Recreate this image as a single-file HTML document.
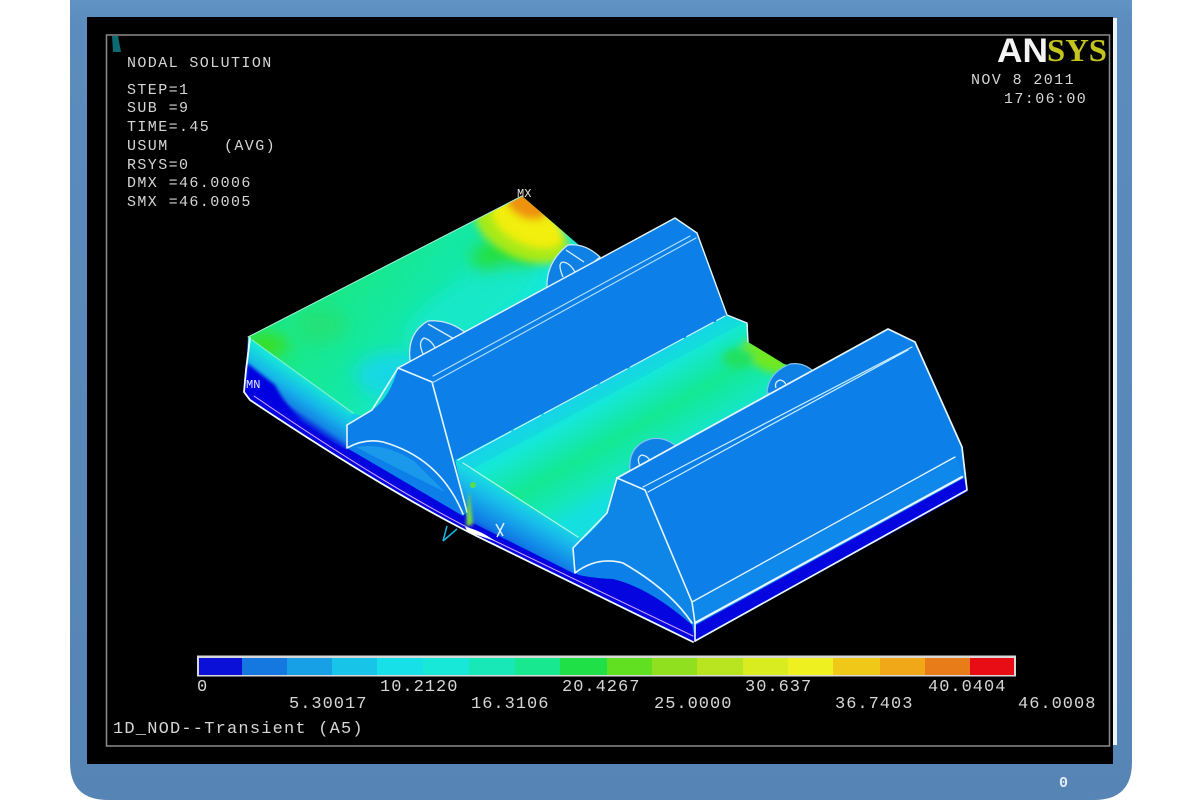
<!DOCTYPE html>
<html><head><meta charset="utf-8"><style>
html,body{margin:0;padding:0;background:#fff;width:1200px;height:800px;overflow:hidden}
svg{display:block}
text{font-family:"Liberation Mono",monospace;fill:#d6d6d6}
</style></head><body>
<svg width="1200" height="800" viewBox="0 0 1200 800" xmlns="http://www.w3.org/2000/svg">
<defs>
<linearGradient id="fr" x1="0" y1="0" x2="0" y2="1"><stop offset="0" stop-color="#6193c4"/><stop offset=".03" stop-color="#5b8cbd"/><stop offset="1" stop-color="#5685b5"/></linearGradient>
<linearGradient id="lslope" gradientUnits="userSpaceOnUse" x1="300" y1="375" x2="270" y2="420"><stop offset="0" stop-color="#16e6d8"/><stop offset=".3" stop-color="#16b8e8"/><stop offset=".55" stop-color="#1485e6"/><stop offset=".72" stop-color="#0505e0"/><stop offset="1" stop-color="#0505e0"/></linearGradient>
<linearGradient id="vslope" gradientUnits="userSpaceOnUse" x1="525" y1="495" x2="495" y2="548"><stop offset="0" stop-color="#18e8e0"/><stop offset=".35" stop-color="#18b8ea"/><stop offset=".75" stop-color="#0f78e6"/><stop offset="1" stop-color="#0505e0"/></linearGradient>
<linearGradient id="vtop" gradientUnits="userSpaceOnUse" x1="570" y1="395" x2="625" y2="490"><stop offset="0" stop-color="#18dcec"/><stop offset=".2" stop-color="#14e8d8"/><stop offset=".55" stop-color="#14e892"/><stop offset=".8" stop-color="#14e8b8"/><stop offset="1" stop-color="#14e0e0"/></linearGradient>
<linearGradient id="stop" gradientUnits="userSpaceOnUse" x1="350" y1="280" x2="450" y2="360"><stop offset="0" stop-color="#18e88a"/><stop offset=".55" stop-color="#14e8a8"/><stop offset="1" stop-color="#14e8d8"/></linearGradient>
<filter id="b8" x="-50%" y="-50%" width="200%" height="200%"><feGaussianBlur stdDeviation="8"/></filter>
<filter id="b4" x="-50%" y="-50%" width="200%" height="200%"><feGaussianBlur stdDeviation="4"/></filter>
<filter id="b2" x="-50%" y="-50%" width="200%" height="200%"><feGaussianBlur stdDeviation="1.6"/></filter>
<clipPath id="c1"><polygon points="248,337 522,196 580,246 600,258 430,370 375,418 353,414"/></clipPath>
<clipPath id="c2"><polygon points="455,460 727,315 748,324 748,342 784,364 815,372 640,480 620,525 590,550 578,538"/></clipPath>
</defs>

<path d="M70 0H1132V762Q1132 800 1094 800H108Q70 800 70 762Z" fill="url(#fr)"/>
<rect x="87" y="17" width="1026" height="747" fill="#000"/>
<rect x="1113" y="18" width="4" height="727" fill="#eef3f8"/>
<rect x="106.5" y="35" width="1003" height="711" fill="none" stroke="#8b8b8b" stroke-width="1.5"/>
<path d="M112 36h6l3 16h-8z" fill="#0d6a72"/>

<!-- base silhouette (lower strip only) -->
<path d="M248 337L244 392L250 400Q400 500 493 544L693 642L967 492L962 447L700 600L470 500L353 413Z" fill="#0505e0"/>
<path d="M248 337L353 413L347 450L250 398L245 388L247 365Z" fill="url(#lslope)"/>
<path d="M247 363Q262 375 275 385Q285 405 302 420L250 398L245 388Z" fill="#0505e0" filter="url(#b2)"/>
<path d="M455 460L578 537L575 574L467 520Z" fill="url(#vslope)"/>
<path d="M353 412L374 408L345 427Z" fill="#14c8e8"/>
<path d="M578 538L609 512L571 550Z" fill="#14c8e8"/>

<!-- left slab -->
<g clip-path="url(#c1)">
<rect x="240" y="190" width="370" height="240" fill="url(#stop)"/>
<g filter="url(#b8)">
<ellipse cx="265" cy="345" rx="24" ry="12" fill="#3ade20"/>
<ellipse cx="320" cy="325" rx="26" ry="18" fill="#20e278"/>
<ellipse cx="505" cy="258" rx="34" ry="20" fill="#20e040"/>
<ellipse cx="470" cy="305" rx="70" ry="22" fill="#14e8c8" transform="rotate(-28 470 305)"/>
<ellipse cx="395" cy="375" rx="40" ry="22" fill="#12d8e4"/>
</g>
<g filter="url(#b4)">
<ellipse cx="522" cy="232" rx="50" ry="26" fill="#a8ea18" transform="rotate(25 522 232)"/>
<ellipse cx="528" cy="224" rx="38" ry="20" fill="#f2ee10" transform="rotate(25 528 224)"/>
<ellipse cx="527" cy="204" rx="22" ry="14" fill="#ee9210" transform="rotate(25 527 204)"/>
</g>
</g>

<!-- valley -->
<g clip-path="url(#c2)">
<rect x="450" y="300" width="380" height="250" fill="url(#vtop)"/>
<g filter="url(#b4)">
<ellipse cx="765" cy="357" rx="26" ry="12" fill="#70e820" transform="rotate(30 765 357)"/>
<ellipse cx="738" cy="358" rx="16" ry="10" fill="#24e060"/>
</g>
<path d="M458 460L727 315L745 322L470 470Z" fill="#14b0e8" opacity=".2"/>
</g>

<!-- lugs -->
<g fill="#0f80e4" stroke="#cdeafa" stroke-width="1.2">
<path d="M410 360Q407 333 428 321Q448 319 466 333L430 372Z"/>
<path d="M547 288Q546 262 568 245Q585 243 600 257L560 290Z"/>
<path d="M630 470Q628 446 650 439Q665 436 677 447L640 475Z" stroke="#7fc4f0"/>
<path d="M767 393Q768 373 790 364Q803 362 813 371L780 395Z" stroke="#7fc4f0"/>
</g>
<g fill="none" stroke="#d6effc" stroke-width="1.3">
<path d="M424 356Q417 342 424 338Q432 340 436 350"/>
<path d="M563 277Q557 263 563 262Q570 263 575 272"/>
<path d="M640 466Q636 457 642 455Q648 456 650 461"/>
<path d="M776 388Q774 382 780 380Q785 381 786 385"/>
<path d="M428 324L456 340M566 250L584 262"/>
</g>

<!-- block 1 -->
<path d="M347 425L372 410Q390 398 398 368L675 218L697 233L727 315L455 460L467 512L463 516Q440 458 383 442Q365 438 347 448Z" fill="#0c80e8"/>
<path d="M347 448Q365 438 383 442Q440 458 463 516Z" fill="#0c80e8"/>
<path d="M356 447Q385 442 415 462L445 492L385 462Z" fill="#1a98ec"/>
<!-- block 2 -->
<path d="M617 478L888 329L915 342L962 447L967 490L695 640L692 623Q670 590 623 563Q597 556 575 573L573 548Q600 525 607 513Z" fill="#0c80e8"/>
<path d="M696 625L964 478L967 491L695 641Z" fill="#0505e0"/>
<path d="M575 573Q597 556 623 563Q670 590 692 623L693 636Z" fill="#0c80e8"/>
<path d="M575 574Q590 578 613 579Q650 588 692 625L693 636Z" fill="#0505e0"/>
<path d="M692 603L957 458L963 477L696 623Z" fill="#0e88ea"/>
<path d="M620 480L645 492L692 603L692 622Q660 585 623 563Q597 556 578 572L574 548Q600 525 607 513Z" fill="#0e86e8"/>

<!-- white edges -->
<g fill="none" stroke="#e6f6ff" stroke-width="1.6" stroke-linecap="round" stroke-linejoin="round">
<path d="M248 337L522 196" stroke="#a9f2d8" stroke-width="1"/>
<path d="M250 338L246 370L244 392L250 400Q400 500 493 544L693 642" stroke-width="1.8" stroke="#f2fbff"/>
<path d="M254 396Q400 496 493 540L693 636" stroke="#d8a8ff" stroke-width="1"/>
<path d="M353 413L252 340" stroke="#7ff0d0" stroke-width="1.2"/>
<path d="M578 537L463 463" stroke="#b0f4e8" stroke-width="1.2"/>
<path d="M398 368L372 410L347 425L347 448Q365 438 383 442Q440 458 463 514"/>
<path d="M398 368L432 382L467 512" />
<path d="M398 368L675 218L697 233L727 315L747 323L748 342" stroke-width="1.4"/>
<path d="M433 376L690 236M432 383L696 238" stroke-width="1.1" stroke="#b7e2fb"/>
<path d="M458 460L725 316" stroke-width="1.2" stroke="#c5f4ff" stroke-dasharray="60 4 30 4"/>
<path d="M617 478L607 513L573 548L575 573Q597 556 623 563Q670 590 692 623"/>
<path d="M617 478L645 490L692 602L695 623L695 641"/>
<path d="M617 478L888 329L915 342L962 447L967 490L695 641" stroke-width="1.7"/>
<path d="M643 487L912 347M648 492L908 350" stroke-width="1.2" stroke="#cdeefd"/>
<path d="M692 602L955 457" stroke-width="1.3"/>
<path d="M695 623L962 477" stroke-width="2.2"/>
</g>

<!-- triad -->
<path d="M469 490L473 525L466 526Z" fill="#7ad840" filter="url(#b2)"/>
<circle cx="473" cy="485" r="3" fill="#5adc50"/>
<path d="M465 527Q480 530 495 541L468 532Z" fill="#fff"/>
<path d="M443 541L457 529M447 526L443 541" stroke="#18b8e0" stroke-width="1.5" fill="none"/>
<path d="M496 524L503 536M504 523L497 537" stroke="#d8f2ff" stroke-width="1.5"/>
<text x="517" y="197" font-size="12" style="fill:#e8e0d8">MX</text>
<text x="246" y="388" font-size="12" style="fill:#e8f0ff">MN</text>

<!-- colour bar -->
<rect x="197" y="655.5" width="819" height="21" fill="#d8d8d8"/>
<g shape-rendering="crispEdges">
<rect x="199" y="658" width="43" height="17" fill="#0a10d8"/>
<rect x="242" y="658" width="45" height="17" fill="#1478e0"/>
<rect x="287" y="658" width="45" height="17" fill="#18a0e6"/>
<rect x="332" y="658" width="45" height="17" fill="#18c4e8"/>
<rect x="377" y="658" width="46" height="17" fill="#18e0e8"/>
<rect x="423" y="658" width="46" height="17" fill="#18e8d8"/>
<rect x="469" y="658" width="46" height="17" fill="#18e8b8"/>
<rect x="515" y="658" width="45" height="17" fill="#18e890"/>
<rect x="560" y="658" width="47" height="17" fill="#20e048"/>
<rect x="607" y="658" width="45" height="17" fill="#60e020"/>
<rect x="652" y="658" width="45" height="17" fill="#90e020"/>
<rect x="697" y="658" width="46" height="17" fill="#b8e420"/>
<rect x="743" y="658" width="45" height="17" fill="#d8ec20"/>
<rect x="788" y="658" width="45" height="17" fill="#eef020"/>
<rect x="833" y="658" width="47" height="17" fill="#f0c818"/>
<rect x="880" y="658" width="45" height="17" fill="#f0a818"/>
<rect x="925" y="658" width="45" height="17" fill="#e87c18"/>
<rect x="970" y="658" width="44" height="17" fill="#e80c14"/>
</g>

<!-- left notes -->
<g font-size="15" letter-spacing="1.4">
<text x="127" y="67">NODAL SOLUTION</text>
<text x="127" y="94">STEP=1</text>
<text x="127" y="112">SUB =9</text>
<text x="127" y="131">TIME=.45</text>
<text x="127" y="150">USUM</text><text x="224" y="150">(AVG)</text>
<text x="127" y="169">RSYS=0</text>
<text x="127" y="187">DMX =46.0006</text>
<text x="127" y="206">SMX =46.0005</text>
</g>
<!-- date -->
<g font-size="15" letter-spacing="1.4">
<text x="971" y="84">NOV  8 2011</text>
<text x="1004" y="103">17:06:00</text>
</g>
<!-- logo -->
<text x="997" y="62" textLength="51" lengthAdjust="spacingAndGlyphs" style="font-family:'Liberation Sans',sans-serif;font-weight:700;font-size:34px;fill:#f4f4f4">AN</text>
<text x="1047" y="61" textLength="60" lengthAdjust="spacingAndGlyphs" style="font-family:'Liberation Serif',serif;font-weight:700;font-size:32px;fill:#c4c41e">SYS</text>
<!-- scale labels -->
<g font-size="17" letter-spacing="1">
<text x="197" y="691">0</text>
<text x="380" y="691">10.2120</text>
<text x="562" y="691">20.4267</text>
<text x="745" y="691">30.637</text>
<text x="928" y="691">40.0404</text>
<text x="289" y="708">5.30017</text>
<text x="471" y="708">16.3106</text>
<text x="654" y="708">25.0000</text>
<text x="835" y="708">36.7403</text>
<text x="1018" y="708">46.0008</text>
</g>
<text x="113" y="733" font-size="17" letter-spacing="1.2">1D_NOD--Transient (A5)</text>
<text x="1059" y="787" font-size="15" font-weight="700" style="fill:#e4edf5">0</text>
</svg>
</body></html>
